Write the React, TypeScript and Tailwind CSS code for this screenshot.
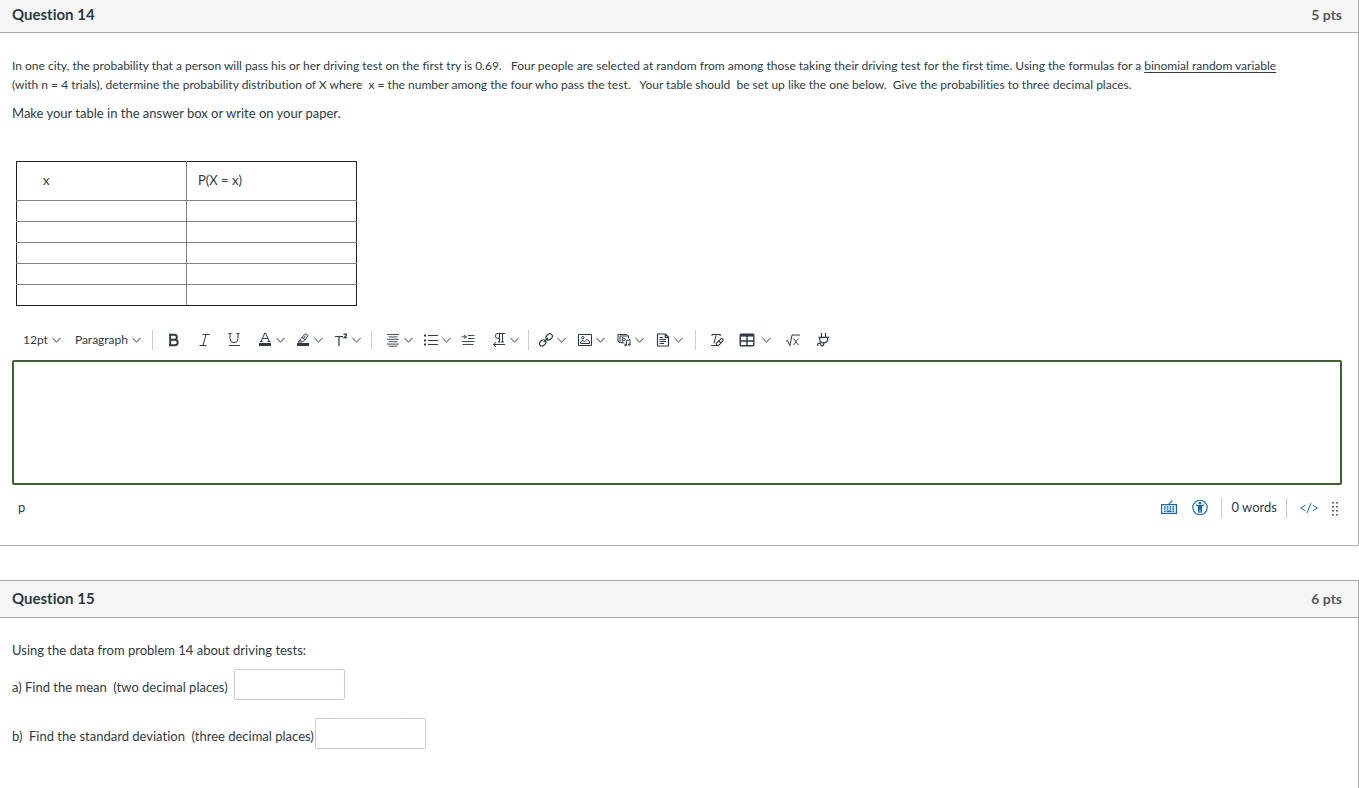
import type { ReactNode } from "react";

const FONT = "font-['Lato','Liberation_Sans',sans-serif]";

function Svg({ children, className = "h-4 w-4" }: { children: ReactNode; className?: string }) {
  return (
    <svg
      viewBox="0 0 16 16"
      className={className}
      fill="none"
      stroke="currentColor"
      strokeWidth="1"
      aria-hidden="true"
    >
      {children}
    </svg>
  );
}

function Chevron() {
  return (
    <svg viewBox="0 0 9 8" className="h-2 w-[9px] shrink-0" fill="none" stroke="currentColor" aria-hidden="true">
      <path d="M0.4 2 4.5 6.1 8.6 2" />
    </svg>
  );
}

function Separator() {
  return <span className="h-5 w-px shrink-0 bg-[#c7cdd1]" />;
}

function Tool({ label, children }: { label: string; children: ReactNode }) {
  return (
    <button type="button" aria-label={label} className="flex h-8 w-[30px] shrink-0 items-center justify-center">
      {children}
    </button>
  );
}

function MenuTool({ label, children }: { label: string; children: ReactNode }) {
  return (
    <button
      type="button"
      aria-label={label}
      aria-haspopup="menu"
      className="flex h-8 w-[38px] shrink-0 items-center gap-[3px] pl-2"
    >
      {children}
      <Chevron />
    </button>
  );
}

function ToolSelect({ label, options }: { label: string; options: string[] }) {
  return (
    <label className="flex h-8 items-center gap-1">
      <select
        aria-label={label}
        defaultValue={options[0]}
        className="[field-sizing:content] appearance-none bg-transparent text-[12px] leading-4 outline-none"
      >
        {options.map((o) => (
          <option key={o}>{o}</option>
        ))}
      </select>
      <Chevron />
    </label>
  );
}

function Toolbar() {
  return (
    <div role="toolbar" aria-label="Formatting" className="flex h-10 items-center pl-[11px]">
      <div className="flex gap-[14px] pr-[11px]">
        <ToolSelect label="Font size" options={["12pt", "14pt", "18pt"]} />
        <ToolSelect label="Block style" options={["Paragraph", "Heading 2", "Heading 3"]} />
      </div>
      <Separator />
      <div className="flex pr-2 pl-[6px]">
        <Tool label="Bold">
          <Svg>
            <path d="M4.2 2.5V13.5M3 2.8h5.4a2.5 2.5 0 0 1 0 5H4.2M8.4 7.8h.6a2.7 2.7 0 0 1 0 5.4H3" strokeWidth="1.9" />
          </Svg>
        </Tool>
        <Tool label="Italic">
          <Svg>
            <path d="M6.5 2.5h7M3.5 13.5h7M10 2.5 7 13.5" />
          </Svg>
        </Tool>
        <Tool label="Underline">
          <Svg>
            <path d="M2.5 1.5h3M10.5 1.5h3M4 1.5v5.2a4 4 0 0 0 8 0V1.5M3 13.5h11" />
          </Svg>
        </Tool>
        <MenuTool label="Text color">
          <Svg>
            <path d="M4 9.5 7.8 1h.8l3.6 8.5M2.8 9.5h3M10.5 9.5h3M5.3 6.5h5.6" />
            <path d="M2 11h12v3H2z" fill="currentColor" stroke="none" />
          </Svg>
        </MenuTool>
        <MenuTool label="Highlight color">
          <Svg>
            <path d="M5.5 7.2 9.8 2.2c1-1 3.8.6 3 2L9.2 8.7C8 10 4.5 9.3 5.5 7.2zM7 5.5 10.5 7.8M5.3 8 3 10h4M8 7l2.7-3.5" />
            <path d="M2 11h12v3H2z" fill="currentColor" stroke="none" />
          </Svg>
        </MenuTool>
        <MenuTool label="Superscript">
          <Svg>
            <path d="M2 4.5h8M6 4.5V14" strokeWidth="1.2" />
            <path d="M10.8 3c.4-1.6 3-1.4 2.7.2-.2 1-1.5 1.6-2.6 2.5h3.2" strokeWidth="1.3" />
          </Svg>
        </MenuTool>
      </div>
      <Separator />
      <div className="flex pr-[7px] pl-[5px]">
        <MenuTool label="Align">
          <Svg>
            <path d="M2 2.5h12M3.5 4.9h9M2 7.3h12M3.5 9.7h9M2 12.1h12M3.5 14.2h9" strokeWidth="0.9" />
          </Svg>
        </MenuTool>
        <MenuTool label="Lists">
          <Svg>
            <path d="M5 3.5h10M5 8.5h10M5 12.5h10" />
            <path d="M1 2.5h2v2H1zM1 7.5h2v2H1zM1 11.5h2v2H1z" fill="currentColor" stroke="none" />
          </Svg>
        </MenuTool>
        <Tool label="Increase indent">
          <Svg>
            <path d="M8 3.5h6.5M8 6.5h6.5M1.5 9.5h13M2.5 12.5h11M1.5 4.8h5M3.8 2.8l2.6 2-2.6 2" strokeWidth="0.9" />
          </Svg>
        </Tool>
        <MenuTool label="Text direction">
          <Svg>
            <path d="M14 1.5H6.8a2.4 2.4 0 0 0 0 4.8h1.4M8.5 1.5V10M11.5 1.5V10M7 10h2.5M10.3 10H13M2.5 12.5h11.5M5 10.2 2.5 12.5 5 14.8" />
          </Svg>
        </MenuTool>
      </div>
      <Separator />
      <div className="flex gap-px pr-[10px] pl-px">
        <MenuTool label="Links">
          <Svg>
            <g transform="rotate(-43 8 8)" strokeWidth="1.2">
              <rect x="0.1" y="5.4" width="6.9" height="5" rx="2.5" />
              <rect x="9" y="5.4" width="6.9" height="5" rx="2.5" />
              <path d="M5 7.9h6" />
            </g>
          </Svg>
        </MenuTool>
        <MenuTool label="Images">
          <Svg>
            <path d="M1.5 2.5h13v11h-13z" />
            <circle cx="5.8" cy="5.6" r="1.2" />
            <path d="M3.5 11.5V10l2.2-1.5 2 1.3 2.2-2.6 2.6 2.4v1.9z" />
          </Svg>
        </MenuTool>
        <MenuTool label="Media">
          <Svg>
            <path d="M8.5 11 4 10.5V3.8M4 10.5 2 9.2V2.5h8.5L12.5 4v2.5M4 4h8.5M6.3 5.5v4l3.4-2zM10.4 13V8.5l3.6-.8v4.8" />
            <ellipse cx="9.6" cy="13.1" rx="0.9" ry="0.7" fill="currentColor" />
            <ellipse cx="13.2" cy="12.6" rx="0.9" ry="0.7" fill="currentColor" />
          </Svg>
        </MenuTool>
        <MenuTool label="Documents">
          <Svg>
            <path d="M2.5 2h8L13.5 5v9h-11zM10.3 2v3.3h3.2" strokeWidth="1.2" />
            <path d="M4.5 5.5H8M4.5 7.5h6.5M4.5 9.5h6.5M4.5 11.5H9" />
          </Svg>
        </MenuTool>
      </div>
      <Separator />
      <div className="flex pl-[6px]">
        <Tool label="Clear formatting">
          <Svg>
            <path d="M3 4V2.5h8.5L11 4M7.2 2.5 5 11.5M2 13.5h7" />
            <path d="M7.5 11 12 6.8c1-.8 2.8.8 2 1.9L10 13c-1.5 1.2-3.6-.5-2.5-2zM9.8 9l2.2 2" strokeWidth="1.1" />
          </Svg>
        </Tool>
        <button
          type="button"
          aria-label="Table"
          aria-haspopup="menu"
          className="flex h-8 w-[46px] shrink-0 items-center gap-[7px] pl-[7px]"
        >
          <Svg>
            <rect x="1.2" y="2.2" width="13.6" height="11.6" rx="1" strokeWidth="1.4" />
            <path d="M1.5 3.4h13" strokeWidth="2.4" />
            <path d="M8 4v10M1.5 9h13" strokeWidth="1.4" />
          </Svg>
          <Chevron />
        </button>
        <Tool label="Math equation">
          <Svg>
            <path d="M1 8.8h1.7l2.2 5L7 3h8" />
            <path d="M8.3 6.8c2.2-.2 2.8 6.2 5.4 5.6M13.7 6.8c-2 0-3.2 5.8-5.6 5.6" />
          </Svg>
        </Tool>
        <Tool label="Apps">
          <Svg>
            <path d="M6.5 1v4M10.5 1v4M3.5 5.3H14M4.8 5.3v2.2c0 4.4 7.8 4.4 7.8 0V5.3M8.7 11v1.6c0 1.8-3 1.8-3 0 0-2-3-2-3 0V14" strokeWidth="1.2" />
          </Svg>
        </Tool>
      </div>
    </div>
  );
}

function StatusBar() {
  return (
    <div className="flex h-[45px] items-center justify-between pr-[3px] pl-[6px]">
      <span>p</span>
      <div className="flex items-center">
        <button type="button" aria-label="Keyboard shortcuts" className="text-[#0e68b3]">
          <Svg>
            <path d="M.6 4.6h14.8v8.8H.6zM8 4.6c0-2.5 2.6-1.6 3-4" strokeWidth="1.2" />
            <path d="M3 7h10" strokeWidth="1.4" strokeDasharray="1.6 1.2" />
            <path d="M3 9h10" strokeWidth="1.4" strokeDasharray="1.6 1.2" />
            <path d="M3 11.2h1.6M5.6 11.2h4.8M11.4 11.2H13" strokeWidth="1.4" />
          </Svg>
        </button>
        <button type="button" aria-label="Accessibility checker" className="ml-[15px] text-[#0e68b3]">
          <Svg>
            <circle cx="8" cy="7.5" r="7.2" strokeWidth="1.1" />
            <circle cx="8" cy="3.2" r="1.3" fill="currentColor" stroke="none" />
            <path d="M3.8 4.6 6.4 5h3.2l2.6-.4v1L10 6.4v6.4H8.4V9.6h-.8v3.2H6V6.4l-2.2-.8z" fill="currentColor" stroke="none" />
          </Svg>
        </button>
        <span className="mr-[10px] ml-[13px] h-5 w-px bg-[#c7cdd1]" />
        <span>0 words</span>
        <span className="mr-3 ml-[9px] h-5 w-px bg-[#c7cdd1]" />
        <button type="button" aria-label="Switch to HTML editor" className="text-[#0e68b3]">
          <svg viewBox="0 0 20 16" className="h-4 w-5" fill="none" stroke="currentColor" aria-hidden="true">
            <path d="M6.3 5.2 1.5 8l4.8 2.8M13.7 5.2 18.5 8l-4.8 2.8M12 3 8 13" />
          </svg>
        </button>
        <button type="button" aria-label="Resize editor" className="ml-3">
          <svg viewBox="0 0 8 16" className="h-4 w-2" fill="none" stroke="currentColor" aria-hidden="true">
            <path d="M2 2v14M6 2v14" strokeWidth="1.6" strokeDasharray="1.6 2.4" />
          </svg>
        </button>
      </div>
    </div>
  );
}

function AnswerField({ id, label, gap }: { id: string; label: string; gap: string }) {
  return (
    <div className="flex items-center">
      <label htmlFor={id} className={`whitespace-pre pt-[6px] ${gap}`}>
        {label}
      </label>
      <input id={id} type="text" className="h-[31px] w-[111px] rounded-xs border border-[#c7cdd1] bg-white px-2 outline-none" />
    </div>
  );
}

const HEADER = "flex items-center justify-between border-b border-[#aaaaaa] bg-[#f5f5f5] pr-4 pl-3 font-bold leading-[19px]";

export default function App() {
  return (
    <main
      className={`${FONT} min-h-screen overflow-x-hidden bg-white text-[13px] leading-[19px] text-[#2d3b45] [font-variant-ligatures:none]`}
    >
      <section className="border-r border-b border-[#aaaaaa] pb-[15px]">
        <header className={`${HEADER} pt-[5px] pb-2`}>
          <h2 className="text-[15px]">Question 14</h2>
          <span className="text-[14px] text-[#595959]">5 pts</span>
        </header>
        <div className="pt-[23px] pr-4 pl-3">
          <p className="mb-[10px] text-[12px]">
            In one city, the probability that a person will pass his or her driving test on the first try is 0.69. &nbsp;
            Four people are selected at random from among those taking their driving test for the first time. Using the
            formulas for a <span className="underline underline-offset-2">binomial random variable</span>{" "}
            <span className="whitespace-nowrap">(with n = 4 trials),</span> determine the probability distribution of X
            where &nbsp;x = the number among the four who pass the test. &nbsp; Your table should &nbsp;be set up like
            the one below. &nbsp;Give the probabilities to three decimal places.
          </p>
          <p>Make your table in the answer box or write on your paper.</p>
          <table className="mt-[38px] ml-1 w-[341px] table-fixed border-collapse border border-[#222222]">
            <thead>
              <tr className="h-[39px]">
                <th className="border border-[#808080] border-t-[#222222] border-l-[#222222] pb-0.5 pl-[26px] text-left font-normal">x</th>
                <th className="border border-[#808080] border-t-[#222222] border-r-[#222222] pb-0.5 pl-[11px] text-left font-normal">P(X = x)</th>
              </tr>
            </thead>
            <tbody>
              {[0, 1, 2, 3, 4].map((row) => (
                <tr key={row} className="h-[21px]">
                  <td className="border border-[#808080] border-l-[#222222] in-[tr:last-child]:border-b-[#222222]" />
                  <td className="border border-[#808080] border-r-[#222222] in-[tr:last-child]:border-b-[#222222]" />
                </tr>
              ))}
            </tbody>
          </table>
          <div className="mt-[14px]">
            <Toolbar />
            <textarea
              aria-label="Answer"
              className="block h-[125px] w-full resize-none rounded-xs border-2 border-[#3f6231] bg-white p-2 outline-none"
            />
            <StatusBar />
          </div>
        </div>
      </section>

      <section className="mt-[34px] border-t border-r border-[#aaaaaa] pb-10">
        <header className={`${HEADER} pt-2 pb-[9px]`}>
          <h2 className="text-[15px]">Question 15</h2>
          <span className="text-[14px] text-[#595959]">6 pts</span>
        </header>
        <div className="pt-[23px] pr-4 pl-3">
          <p className="mb-[9px]">Using the data from problem 14 about driving tests:</p>
          <div className="flex flex-col gap-[18px]">
            <AnswerField id="mean" label={"a) Find the mean\u00a0 (two decimal places)"} gap="pr-[6px]" />
            <AnswerField id="deviation" label={"b)\u00a0 Find the standard deviation\u00a0 (three decimal places)"} gap="pr-px" />
          </div>
        </div>
      </section>
    </main>
  );
}
